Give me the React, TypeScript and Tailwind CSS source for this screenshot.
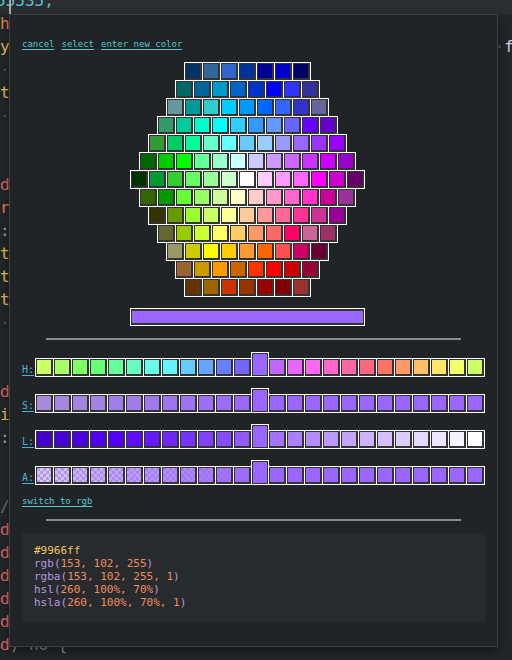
import React from 'react';
import clsx from 'clsx';

// hexagon palette, 127 colours, row by row
const HEX_ROWS: string[][] = [
  ['#003366', '#336699', '#3366CC', '#003399', '#000099', '#0000CC', '#000066'],
  ['#006666', '#006699', '#0099CC', '#0066CC', '#0033CC', '#0000FF', '#3333FF', '#333399'],
  ['#669999', '#009999', '#33CCCC', '#00CCFF', '#0099FF', '#0066FF', '#3366FF', '#3333CC', '#666699'],
  ['#339966', '#00CC99', '#00FFCC', '#00FFFF', '#33CCFF', '#3399FF', '#6699FF', '#6666FF', '#6600FF', '#6600CC'],
  ['#339933', '#00CC66', '#00FF99', '#66FFCC', '#66FFFF', '#66CCFF', '#99CCFF', '#9999FF', '#9966FF', '#9933FF', '#9900FF'],
  ['#006600', '#00CC00', '#00FF00', '#66FF99', '#99FFCC', '#CCFFFF', '#CCCCFF', '#CC99FF', '#CC66FF', '#CC33FF', '#CC00FF', '#9900CC'],
  ['#003300', '#009933', '#33CC33', '#66FF66', '#99FF99', '#CCFFCC', '#FFFFFF', '#FFCCFF', '#FF99FF', '#FF66FF', '#FF00FF', '#CC00CC', '#660066'],
  ['#336600', '#009900', '#66FF33', '#99FF66', '#CCFF99', '#FFFFCC', '#FFCCCC', '#FF99CC', '#FF66CC', '#FF33CC', '#CC0099', '#993399'],
  ['#333300', '#669900', '#99FF33', '#CCFF66', '#FFFF99', '#FFCC99', '#FF9999', '#FF6699', '#FF3399', '#CC3399', '#990099'],
  ['#666633', '#99CC00', '#CCFF33', '#FFFF66', '#FFCC66', '#FF9966', '#FF6666', '#FF0066', '#CC6699', '#993366'],
  ['#999966', '#CCCC00', '#FFFF00', '#FFCC00', '#FF9933', '#FF6600', '#FF5050', '#CC0066', '#660033'],
  ['#996633', '#CC9900', '#FF9900', '#CC6600', '#FF3300', '#FF0000', '#CC0000', '#990033'],
  ['#663300', '#996600', '#CC3300', '#993300', '#990000', '#800000', '#993333'],
];

const H = 260;
const S = 100;
const L = 70;

const hsla = (h: number, s: number, l: number, a = 1) => `hsla(${h}, ${s}%, ${l}%, ${a})`;
const steps = Array.from({ length: 25 }, (_, i) => i - 12);

const hueRow = steps.map((d) => hsla((((H + d * 15) % 360) + 360) % 360, S, L));
const satRow = steps.map((d) => hsla(H, Math.min(100, S + d * 4), L));
const lightRow = steps.map((d) => hsla(H, S, Math.min(100, L + d * 2.5)));
const alphaRow = steps.map((d) => hsla(H, S, L, Math.min(1, 1 + d * 0.05)));

// editor lines behind the popup
const EDITOR_LINES: { text: string; color: string }[] = [
  { text: 'h', color: 'text-[#e5824f]' },
  { text: 'y', color: 'text-[#e8bb52]' },
  { text: '·', color: 'text-[#55585d]' },
  { text: 't', color: 'text-[#e8bb52]' },
  { text: '·', color: 'text-[#55585d]' },
  { text: '', color: '' },
  { text: '', color: '' },
  { text: 'd', color: 'text-[#e06868]' },
  { text: 'r', color: 'text-[#e5824f]' },
  { text: ':', color: 'text-[#9aa6b8]' },
  { text: 't', color: 'text-[#e8bb52]' },
  { text: 't', color: 'text-[#e8bb52]' },
  { text: 't', color: 'text-[#e8bb52]' },
  { text: '·', color: 'text-[#55585d]' },
  { text: '', color: '' },
  { text: '', color: '' },
  { text: 'd', color: 'text-[#e06868]' },
  { text: 'i', color: 'text-[#e8bb52]' },
  { text: ':', color: 'text-[#9aa6b8]' },
  { text: '', color: '' },
  { text: '', color: '' },
  { text: '/', color: 'text-[#6b7079]' },
  { text: 'd', color: 'text-[#e06868]' },
  { text: 'd', color: 'text-[#e06868]' },
  { text: 'd', color: 'text-[#e06868]' },
  { text: 'd', color: 'text-[#e06868]' },
  { text: 'd', color: 'text-[#e06868]' },
];

const Swatch = ({ color, checker }: { color: string; checker?: boolean }) => (
  <div className="w-[17px] h-[17px] bg-[#333] pt-[1px] pl-[1px]">
    <div
      className={clsx(
        'w-[14px] h-[14px]',
        checker && 'bg-[image:repeating-conic-gradient(#ffffff_0%_25%,#c4c4c4_0%_50%)] bg-size-[6px_6px]'
      )}
    >
      <div className="w-full h-full" style={{ backgroundColor: color }} />
    </div>
  </div>
);

const SliderRow = ({ label, colors, checker, className }: { label: string; colors: string[]; checker?: boolean; className?: string }) => (
  <div className={clsx('flex items-end', className)}>
    <span className="w-[13px] mb-[1px] text-[10px] leading-[12px] text-[#4eb3cf] underline underline-offset-2">{label}</span>
    <div className="flex bg-white p-[1px] gap-[1px]">
      {colors.slice(0, 12).map((c, i) => (
        <Swatch key={i} color={c} checker={checker} />
      ))}
    </div>
    <div className="-ml-[1px] w-[19px] h-[25px] border border-white bg-[#333] p-[1px]">
      <div className="w-full h-full" style={{ backgroundColor: colors[12] }} />
    </div>
    <div className="-ml-[1px] flex bg-white p-[1px] gap-[1px]">
      {colors.slice(13).map((c, i) => (
        <Swatch key={i} color={c} checker={checker} />
      ))}
    </div>
  </div>
);

const Fn = ({ name, args }: { name: string; args: string }) => (
  <div>
    <span className="text-[#b896e0]">{name}(</span>
    <span className="text-[#f28c5c]">{args}</span>
    <span className="text-[#b896e0]">)</span>
  </div>
);

const App: React.FC = () => {
  return (
    <div className="relative w-[512px] h-[660px] overflow-hidden bg-[#232629] font-['DejaVu_Sans_Mono',monospace]">
      {/* Editor underneath */}
      <div className="text-[16px] leading-[23px] whitespace-pre">
        <div className="relative -mt-[11px] h-[25px] bg-[#2b2d31] text-[#4fc1c9] -ml-[4px]">
          55535,
          <span className="absolute left-[13px] top-[11px] w-[2px] h-[14px] bg-[#a9abae]" />
        </div>
        <div className="-mt-[2px]">
          {EDITOR_LINES.map((line, i) => (
            <div key={i} className={clsx('flex h-[23px]', line.color)}>
              <span>{line.text}</span>
              {i === 1 && <span className="ml-auto -mr-[2px] text-[#c9d1df]"><span className="text-[#55585d]">·</span>f</span>}
            </div>
          ))}
          <div className="h-[23px]">
            <span className="text-[#e06868]">d</span>
            <span className="text-[#8a919c]">) no {'{'}</span>
          </div>
          <div className="h-[23px] text-[#e5824f]">  return</div>
        </div>
      </div>

      {/* Colour picker popup */}
      <div className="absolute left-[9px] top-[14px] w-[489px] h-[633px] border border-[#3b3e42] bg-[#212427] px-[12px] pt-[23px] shadow-[0_4px_10px_rgba(0,0,0,0.45)]">
        <div className="flex gap-[7px] text-[9px] leading-[12px] text-[#55c4cc]">
          <span className="underline underline-offset-2">cancel</span>
          <span className="underline underline-offset-2">select</span>
          <span className="underline underline-offset-2">enter new color</span>
        </div>

        <div className="ml-[108px] w-[235px] mt-[12px]">
          <div className="flex flex-col items-center pt-[1px]">
            {HEX_ROWS.map((row, r) => (
              <div key={r} className="-mt-[1px] flex bg-white p-[1px] gap-[1px]">
                {row.map((c) => (
                  <Swatch key={c} color={c} />
                ))}
              </div>
            ))}
          </div>
          <div className="mt-[11px] h-[18px] border border-white bg-[#333] px-[1px] py-[2px]">
            <div className="h-full bg-[#9966ff]" />
          </div>
        </div>

        <div className="mt-[12px] mx-auto w-[415px] h-[2px] bg-[#8b8b8b]" />

        <SliderRow label="H:" colors={hueRow} className="mt-[12px]" />
        <SliderRow label="S:" colors={satRow} className="mt-[11px]" />
        <SliderRow label="L:" colors={lightRow} className="mt-[11px]" />
        <SliderRow label="A:" colors={alphaRow} checker className="mt-[11px]" />

        <div className="mt-[10px] text-[9px] leading-[12px] text-[#55c4cc]">
          <span className="underline underline-offset-2">switch to rgb</span>
        </div>

        <div className="mt-[12px] mx-auto w-[415px] h-[2px] bg-[#8b8b8b]" />

        <div className="mt-[12px] h-[89px] bg-[#282b2e] pt-[11px] pl-[12px] text-[11px] leading-[13px] whitespace-pre">
          <div className="text-[#f2c35d]">#9966ff</div>
          <Fn name="rgb" args="153, 102, 255" />
          <Fn name="rgba" args="153, 102, 255, 1" />
          <Fn name="hsl" args="260, 100%, 70%" />
          <Fn name="hsla" args="260, 100%, 70%, 1" />
        </div>
      </div>
    </div>
  );
};

export default App;
